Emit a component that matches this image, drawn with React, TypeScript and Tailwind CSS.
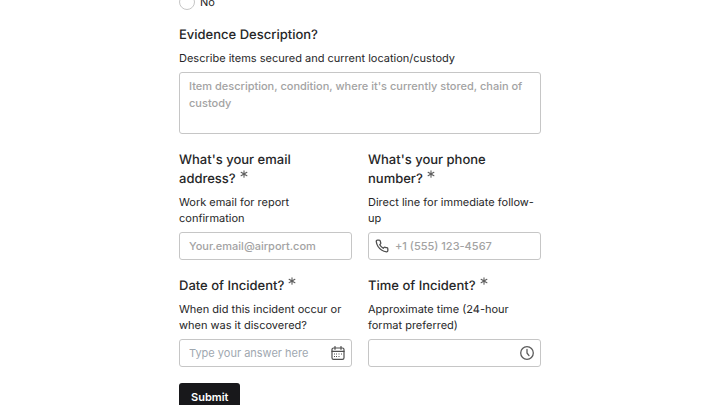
import type { ReactNode } from 'react';

type FieldProps = {
  id: string;
  label: string;
  hint: string;
  required?: boolean;
  children: ReactNode;
};

const controlClass =
  'block w-full rounded-[3px] border border-[#c6c6c6] bg-white px-[9px] text-[11px] font-medium text-[#262627] placeholder:text-[#a3a3a3] placeholder:opacity-100 outline-none focus:border-neutral-500';

function Field({ id, label, hint, required, children }: FieldProps) {
  const cut = label.lastIndexOf(' ') + 1;

  return (
    <div>
      {/* the asterisk stays on the same line as the last word */}
      <label htmlFor={id} className="block pt-px text-[13px] leading-[19px] font-medium">
        {label.slice(0, cut)}
        <span className="whitespace-nowrap">
          {label.slice(cut)}
          {required && <Asterisk />}
        </span>
      </label>
      <p id={`${id}-hint`} className="mt-[5px] mb-1.5 text-[11px] leading-4">
        {hint}
      </p>
      {children}
    </div>
  );
}

function Asterisk() {
  return (
    <svg
      viewBox="0 0 8 8"
      className="ml-1 inline-block size-2 align-[5px]"
      fill="none"
      stroke="#5f5f5f"
      strokeWidth="1.1"
      strokeLinecap="round"
      aria-hidden="true"
    >
      <path d="M4 .7v6.6M1.1 2.3l5.8 3.4M6.9 2.3L1.1 5.7" />
    </svg>
  );
}

function PhoneIcon() {
  return (
    <svg
      viewBox="0 0 24 24"
      className="size-3.5 shrink-0"
      fill="none"
      stroke="#4f4f4f"
      strokeWidth="2.2"
      strokeLinecap="round"
      strokeLinejoin="round"
      aria-hidden="true"
    >
      <path d="M22 16.92v3a2 2 0 0 1-2.18 2 19.79 19.79 0 0 1-8.63-3.07 19.5 19.5 0 0 1-6-6 19.79 19.79 0 0 1-3.07-8.67A2 2 0 0 1 4.11 2h3a2 2 0 0 1 2 1.72 12.84 12.84 0 0 0 .7 2.81 2 2 0 0 1-.45 2.11L8.09 9.91a16 16 0 0 0 6 6l1.27-1.27a2 2 0 0 1 2.11-.45 12.84 12.84 0 0 0 2.81.7A2 2 0 0 1 22 16.92z" />
    </svg>
  );
}

function CalendarIcon() {
  return (
    <svg viewBox="0 0 14 14" className="size-3.5 shrink-0" fill="none" stroke="#4f4f4f" strokeWidth="1.2" aria-hidden="true">
      <rect x="1" y="2" width="12" height="11.3" rx="1.6" />
      <path d="M1 5.4h12M4 .5v2.8M10 .5v2.8" strokeLinecap="round" />
      <path d="M3 8h1M5 8h1M7.5 8h1M10 8h1M3 10.5h1M5 10.5h1M7.5 10.5h1" strokeWidth="1" />
    </svg>
  );
}

function ClockIcon() {
  return (
    <svg viewBox="0 0 14 14" className="size-3.5 shrink-0" fill="none" stroke="#5c5c5c" strokeWidth="1.3" aria-hidden="true">
      <circle cx="7" cy="7" r="6.3" />
      <path d="M7 3.4V7l2 2.6" strokeLinecap="round" strokeLinejoin="round" />
    </svg>
  );
}

// Input row with an icon on either side of the text box
function IconBox({ children }: { children: ReactNode }) {
  return (
    <div className="flex h-7 items-center gap-1.5 rounded-[3px] border border-[#c6c6c6] bg-white px-1.5 focus-within:border-neutral-500">
      {children}
    </div>
  );
}

const innerInput = 'min-w-0 flex-1 bg-transparent text-[11px] outline-none placeholder:opacity-100';

export default function App() {
  return (
    <div className="h-screen overflow-hidden bg-white font-[Inter,sans-serif] text-[#262627] [text-rendering:geometricPrecision]">
      <form className="mx-auto -mt-1.5 flex max-w-[362px] flex-col gap-4" onSubmit={(e) => e.preventDefault()}>
        <div className="flex flex-col gap-[15px]">
          <label className="flex h-4 items-center gap-[5px] text-[11px] leading-4">
            <input
              type="radio"
              name="evidence"
              value="no"
              className="size-4 appearance-none rounded-full border border-[#c6c6c6] bg-white checked:border-[5px] checked:border-[#18181b]"
            />
            No
          </label>

          <Field id="evidence-description" label="Evidence Description?" hint="Describe items secured and current location/custody">
            <textarea
              id="evidence-description"
              aria-describedby="evidence-description-hint"
              placeholder="Item description, condition, where it's currently stored, chain of custody"
              className={`${controlClass} h-[62px] resize-none py-[5px] leading-[17px]`}
            />
          </Field>
        </div>

        <div className="grid grid-cols-2 gap-4">
          <Field id="email" label="What's your email address?" hint="Work email for report confirmation" required>
            <input
              id="email"
              type="email"
              required
              aria-describedby="email-hint"
              placeholder="Your.email@airport.com"
              className={`${controlClass} h-7`}
            />
          </Field>

          <Field id="phone" label="What's your phone number?" hint="Direct line for immediate follow-up" required>
            <IconBox>
              <PhoneIcon />
              <input
                id="phone"
                type="tel"
                required
                aria-describedby="phone-hint"
                placeholder="+1 (555) 123-4567"
                className={`${innerInput} font-medium placeholder:text-[#a3a3a3]`}
              />
            </IconBox>
          </Field>

          <Field id="date" label="Date of Incident?" hint="When did this incident occur or when was it discovered?" required>
            <IconBox>
              <input
                id="date"
                type="text"
                required
                aria-describedby="date-hint"
                placeholder="Type your answer here"
                className={`${innerInput} pl-[3px] placeholder:text-[#a0a8b0]`}
              />
              <CalendarIcon />
            </IconBox>
          </Field>

          <Field id="time" label="Time of Incident?" hint="Approximate time (24-hour format preferred)" required>
            <IconBox>
              <input id="time" type="text" required aria-describedby="time-hint" className={`${innerInput} pl-[3px]`} />
              <ClockIcon />
            </IconBox>
          </Field>
        </div>

        <button
          type="submit"
          className="h-[29px] self-start rounded-[3px] bg-[#18181b] px-3 text-[11px] font-semibold text-white"
        >
          Submit
        </button>
      </form>
    </div>
  );
}
